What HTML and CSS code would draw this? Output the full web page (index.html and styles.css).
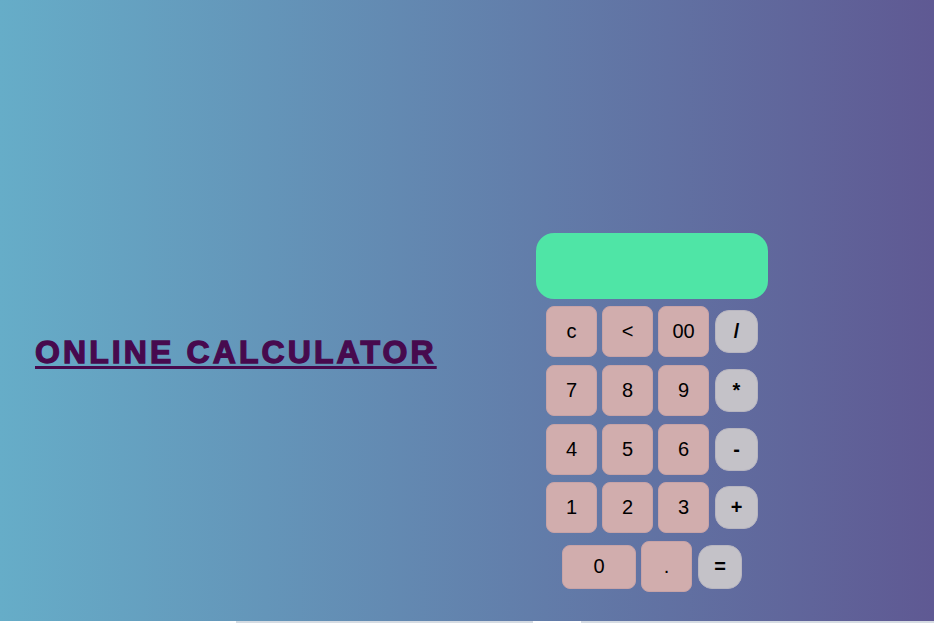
FILE: index.html
```html
<!DOCTYPE html>
<html>
<head>
<meta charset="utf-8">
<title>Online Calculator</title>
<link rel="stylesheet" href="styles.css">
</head>
<body>
<div class="page">
  <h1 class="title">ONLINE CALCULATOR</h1>
  <div class="calc">
    <div class="display"></div>
    <div class="keys">
      <div class="row">
        <button class="key num">c</button>
        <button class="key num">&lt;</button>
        <button class="key num">00</button>
        <button class="key op">/</button>
      </div>
      <div class="row">
        <button class="key num">7</button>
        <button class="key num">8</button>
        <button class="key num">9</button>
        <button class="key op">*</button>
      </div>
      <div class="row">
        <button class="key num">4</button>
        <button class="key num">5</button>
        <button class="key num">6</button>
        <button class="key op">-</button>
      </div>
      <div class="row">
        <button class="key num">1</button>
        <button class="key num">2</button>
        <button class="key num">3</button>
        <button class="key op">+</button>
      </div>
      <div class="row last">
        <button class="key num zero">0</button>
        <button class="key num">.</button>
        <button class="key op">=</button>
      </div>
    </div>
  </div>
</div>
<div class="strip">
  <span class="seg w1"></span><span class="seg g1"></span><span class="seg w2"></span><span class="seg g2"></span>
</div>
</body>
</html>
```
FILE: styles.css
```css
html, body {
  margin: 0;
  padding: 0;
  background: #ffffff;
}
body {
  width: 934px;
  height: 623px;
  overflow: hidden;
  font-family: "Liberation Sans", Arial, sans-serif;
}
.page {
  height: 621px;
  background: linear-gradient(to right, #66adc8 0%, #5f5993 100%);
  display: flex;
  align-items: flex-start;
  padding-left: 35px;
  box-sizing: border-box;
}
.title {
  margin: 334px 0 0 0;
  width: 501px;
  flex: none;
  font-family: "Liberation Sans", Arial, sans-serif;
  font-size: 32px;
  line-height: 37px;
  font-weight: bold;
  letter-spacing: 3.1px;
  color: #470a4e;
  -webkit-text-stroke: 1.3px #470a4e;
  text-decoration: underline;
  text-decoration-thickness: 3px;
  text-underline-offset: 3px;
}
.calc {
  margin-top: 233px;
  width: 232px;
  flex: none;
}
.display {
  height: 66px;
  background: #4fe5a6;
  border-radius: 18px;
}
.keys {
  margin-top: 7px;
  display: flex;
  flex-direction: column;
  gap: 7.75px;
}
.row {
  display: flex;
  justify-content: center;
  align-items: center;
  gap: 5px;
  height: 51px;
}
.key {
  box-sizing: border-box;
  font-family: "Liberation Sans", Arial, sans-serif;
  font-size: 20px;
  color: #000;
  padding: 0;
  margin: 0;
  display: flex;
  align-items: center;
  justify-content: center;
}
.num {
  width: 51px;
  height: 51px;
  background: #d1adad;
  border: 1px solid #c7a3a7;
  border-radius: 8px;
}
.op {
  width: 43px;
  height: 43px;
  margin-left: 1px;
  background: #c4c2c8;
  border: 1px solid #b7b5c0;
  border-radius: 14px;
  font-weight: bold;
}
.last .zero {
  width: 74px;
  height: 44px;
}
.last .op {
  width: 44px;
  height: 44px;
}
.strip {
  height: 2px;
  display: flex;
}
.seg { display: block; height: 2px; }
.w1 { width: 236px; background: #ffffff; }
.g1 { width: 297px; background: #d6dce3; }
.w2 { width: 48px; background: #ffffff; }
.g2 { width: 353px; background: #d6dce3; }
```
